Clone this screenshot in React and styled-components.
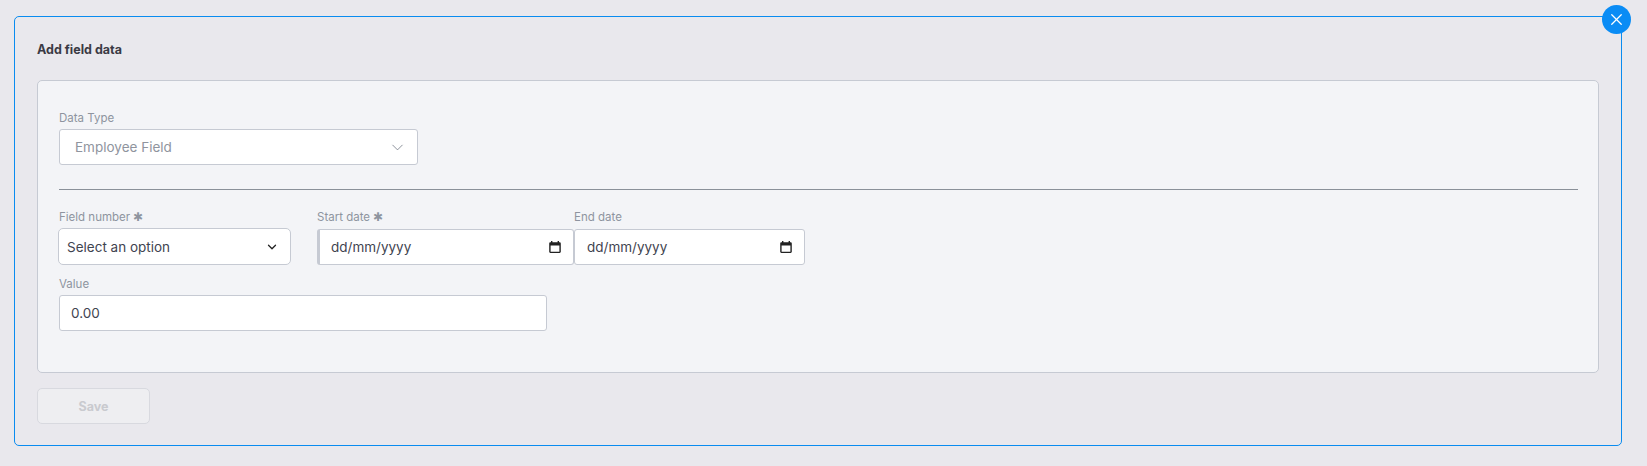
import React from "react";
import styled, { createGlobalStyle } from "styled-components";
import { ChevronDown, X } from "lucide-react";

const GlobalStyle = createGlobalStyle`
  html, body {
    margin: 0;
    height: 100%;
    background: #e9e8ed;
    font-family: "Inter", "Open Sans", "Liberation Sans", sans-serif;
  }
  * {
    box-sizing: border-box;
  }
`;

const Page = styled.div`
  padding: 16px 25px 20px 14px;
  width: 1647px;
  height: 466px;
`;

const Card = styled.section`
  position: relative;
  height: 430px;
  border: 1px solid #0a8cf0;
  border-radius: 5px;
  padding: 25px 22px 0 22px;
`;

const CloseButton = styled.button`
  position: absolute;
  top: -12px;
  right: -10px;
  width: 29px;
  height: 29px;
  padding: 0;
  border: 0;
  border-radius: 50%;
  background: #0a8cf5;
  color: #fff;
  display: flex;
  align-items: center;
  justify-content: center;
`;

const Title = styled.h2`
  margin: 0 0 23px;
  height: 15px;
  font-size: 12.5px;
  line-height: 15px;
  font-weight: 700;
  color: #3a3a44;
`;

const Panel = styled.div`
  height: 293px;
  background: #f3f4f7;
  border: 1px solid #c6cad3;
  border-radius: 5px;
  padding: 30px 20px 0 21px;
`;

const Label = styled.label`
  display: block;
  height: 14px;
  font-size: 11.5px;
  line-height: 14px;
  color: #8e949f;
  margin-bottom: ${(props) => props.$gap || 4}px;
  padding-left: ${(props) => props.$indent || 0}px;
`;

const Field = styled.div`
  width: ${(props) => props.$width}px;
  flex-shrink: 0;
`;

const Control = styled.div`
  height: 36px;
  background: #fff;
  border: 1px solid #c6cad3;
  border-left-width: ${(props) => (props.$accent ? 3 : 1)}px;
  border-radius: 3px;
  display: flex;
  align-items: center;
  justify-content: space-between;
  padding: 0 ${(props) => props.$right || 11}px 0 ${(props) => props.$left || 11}px;
  font-size: 13.5px;
  color: ${(props) => props.$color || "#3f4450"};
`;

const TallControl = styled(Control)`
  height: 37px;
  border-radius: 5px;
  margin-left: -1px;
`;

const Divider = styled.hr`
  margin: 24px 0 20px;
  border: 0;
  border-top: 1px solid #8a9099;
`;

const Row = styled.div`
  display: flex;
  align-items: flex-start;
  margin-bottom: 12px;
`;

const SaveButton = styled.button`
  display: block;
  width: 113px;
  height: 36px;
  margin-top: 15px;
  background: #eeeef1;
  border: 1px solid #d8d9df;
  border-radius: 5px;
  font-family: inherit;
  font-size: 12.5px;
  font-weight: 700;
  color: #c9cacf;
`;

const CalendarIcon = () => (
  <svg width="14" height="14" viewBox="0 0 14 14" aria-hidden="true">
    <path
      d="M3 1h1.4v1.2h5.2V1H11v1.2h.6c.6 0 1.2.6 1.2 1.2v8.4c0 .6-.6 1.2-1.2 1.2H2.4c-.6 0-1.2-.6-1.2-1.2V3.4c0-.6.6-1.2 1.2-1.2H3V1zm-.4 4.4v6.4h8.8V5.4H2.6z"
      fill="#222"
    />
  </svg>
);

const DateControl = ({ accent }) => (
  <Control $accent={accent} $left={accent ? 11 : 12} $right={11}>
    dd/mm/yyyy
    <CalendarIcon />
  </Control>
);

export default function App() {
  return (
    <>
      <GlobalStyle />
      <Page>
        <Card>
          <CloseButton aria-label="Close">
            <X size={19} strokeWidth={1.6} />
          </CloseButton>
          <Title>Add field data</Title>
          <Panel>
            <Field $width={359}>
              <Label>Data Type</Label>
              <Control $color="#8f949e" $left={15} $right={10}>
                Employee Field
                <ChevronDown size={19} strokeWidth={1} color="#6f7580" />
              </Control>
            </Field>
            <Divider />
            <Row>
              <Field $width={258}>
                <Label>Field number ✱</Label>
                <TallControl $left={8} $right={11} style={{ width: 233 }}>
                  Select an option
                  <ChevronDown size={14} strokeWidth={2.2} color="#222" />
                </TallControl>
              </Field>
              <Field $width={257}>
                <Label $gap={5}>Start date ✱</Label>
                <DateControl accent />
              </Field>
              <Field $width={231}>
                <Label $gap={5}>End date</Label>
                <DateControl />
              </Field>
            </Row>
            <Field $width={488}>
              <Label>Value</Label>
              <Control>0.00</Control>
            </Field>
          </Panel>
          <SaveButton disabled>Save</SaveButton>
        </Card>
      </Page>
    </>
  );
}
